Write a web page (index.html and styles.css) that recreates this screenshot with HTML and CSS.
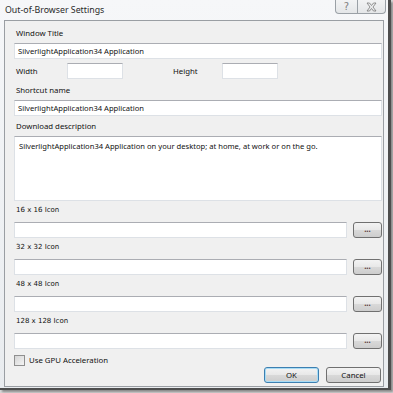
FILE: index.html
```html
<!DOCTYPE html>
<html>
<head>
    <title>Out-of-Browser Settings</title>
    <link rel="stylesheet" href="styles.css">
</head>
<body>
    <div class="window">
        <div class="titlebar">
            <span class="title">Out-of-Browser Settings</span>
            <div class="caption-buttons">
                <div class="cap-btn help">?</div>
                <div class="cap-btn close">
                    <svg width="11" height="10" viewBox="0 0 11 10">
                        <path d="M1 1 H3.5 L5.5 3.5 L7.5 1 H10 L7 5 L10 9 H7.5 L5.5 6.5 L3.5 9 H1 L4 5 Z" fill="none" stroke="#7a7a7a" stroke-width="0.8"/>
                    </svg>
                </div>
            </div>
        </div>
        <div class="client">
            <div class="label">Window Title</div>
            <div class="input full">SilverlightApplication34 Application</div>

            <div class="size-row">
                <span class="label inline w-label">Width</span>
                <div class="input small"></div>
                <span class="label inline h-label">Height</span>
                <div class="input small"></div>
            </div>

            <div class="label">Shortcut name</div>
            <div class="input full">SilverlightApplication34 Application</div>

            <div class="label">Download description</div>
            <div class="input area">SilverlightApplication34 Application on your desktop; at home, at work or on the go.</div>

            <div class="label icon-label">16 x 16 Icon</div>
            <div class="browse-row">
                <div class="input grow"></div>
                <div class="button dots">...</div>
            </div>

            <div class="label icon-label">32 x 32 Icon</div>
            <div class="browse-row">
                <div class="input grow"></div>
                <div class="button dots">...</div>
            </div>

            <div class="label icon-label">48 x 48 Icon</div>
            <div class="browse-row">
                <div class="input grow"></div>
                <div class="button dots">...</div>
            </div>

            <div class="label icon-label">128 x 128 Icon</div>
            <div class="browse-row">
                <div class="input grow"></div>
                <div class="button dots">...</div>
            </div>

            <div class="check-row">
                <div class="checkbox"></div>
                <span class="label inline">Use GPU Acceleration</span>
            </div>

            <div class="button-row">
                <div class="button default">OK</div>
                <div class="button">Cancel</div>
            </div>
        </div>
    </div>
</body>
</html>
```

FILE: styles.css
```css
body {
    margin: 0;
    padding: 0;
    width: 393px;
    height: 393px;
    background-color: #d8d8d8;
    font-family: "Noto Sans", "Open Sans", sans-serif;
    overflow: hidden;
}

.window {
    width: 384px;
    height: 384px;
    padding: 0 0 4px 4px;
    background: linear-gradient(to bottom, #f6f7f9, #e9ecef);
    border-right: 3px solid #4e4e4e;
    border-bottom: 2px solid #4e4e4e;
    box-shadow: 2px 2px 2px #8a8a8a;
}

.titlebar {
    height: 20px;
    display: flex;
    justify-content: space-between;
    align-items: flex-start;
}

.title {
    font-size: 8.8px;
    color: #2a2a2a;
    line-height: 20px;
    padding-left: 1px;
}

.caption-buttons {
    display: flex;
    margin-right: 2px;
}

.cap-btn {
    height: 13px;
    border: 1px solid #9aa0a6;
    border-top: none;
    background: linear-gradient(to bottom, #f2f3f4, #e4e6e8);
    display: flex;
    align-items: center;
    justify-content: center;
}

.help {
    width: 21px;
    border-radius: 0 0 0 4px;
    font-size: 10px;
    color: #808080;
    font-family: "DejaVu Sans", sans-serif;
}

.close {
    width: 27px;
    border-left: none;
    border-radius: 0 0 4px 0;
}

.client {
    border: 1px solid #9a9ea3;
    background-color: #f0f0f0;
    padding: 6px 2px 0 9px;
    box-sizing: border-box;
    height: 367px;
    margin-right: 4px;
}

.label {
    font-size: 7.8px;
    line-height: 13px;
    height: 13px;
    color: #111;
    padding-left: 2px;
    margin-bottom: 3px;
}

.label.inline {
    margin-bottom: 0;
    padding-left: 0;
}

.icon-label {
    font-family: "DejaVu Sans", sans-serif;
    font-size: 7px;
    margin-bottom: 5px;
}

.input {
    box-sizing: border-box;
    height: 16px;
    background-color: #fff;
    border: 1px solid #dde1e6;
    border-top-color: #abadb3;
    font-size: 7.6px;
    line-height: 14px;
    padding-left: 3px;
    color: #111;
    white-space: nowrap;
    overflow: hidden;
}

.full {
    width: 368px;
    margin-bottom: 4px;
}

.size-row {
    display: flex;
    align-items: center;
    margin-bottom: 5px;
    padding-left: 2px;
}

.w-label {
    width: 51px;
}

.h-label {
    width: 49px;
    margin-left: 50px;
}

.small {
    width: 56px;
}

.area {
    width: 368px;
    height: 65px;
    white-space: normal;
    padding: 3px 4px;
    line-height: 12px;
    margin-bottom: 3px;
}

.browse-row {
    display: flex;
    gap: 6px;
    width: 368px;
    margin-bottom: 3px;
}

.grow {
    flex: 1;
}

.button {
    box-sizing: border-box;
    height: 16px;
    width: 55px;
    border: 1px solid #707070;
    border-radius: 3px;
    background: linear-gradient(to bottom, #f3f3f3 0%, #e8e8e8 50%, #d9d9d9 51%, #cdcdcd 100%);
    font-size: 7.8px;
    line-height: 14px;
    text-align: center;
    color: #111;
}

.dots {
    width: 29px;
    font-size: 8px;
    font-weight: bold;
    color: #5a3a3a;
    line-height: 12px;
}

.check-row {
    display: flex;
    align-items: center;
    gap: 4px;
    margin-top: 6px;
    height: 11px;
}

.checkbox {
    width: 11px;
    height: 11px;
    box-sizing: border-box;
    border: 1px solid #8f8f8f;
    background: linear-gradient(135deg, #d5d5d5, #f4f4f4);
}

.button-row {
    display: flex;
    justify-content: flex-end;
    gap: 7px;
    width: 367px;
    margin-top: 1px;
}

.button.default {
    border-color: #3c7fb1;
    box-shadow: inset 0 0 0 1px #a8dcf5;
}
```
